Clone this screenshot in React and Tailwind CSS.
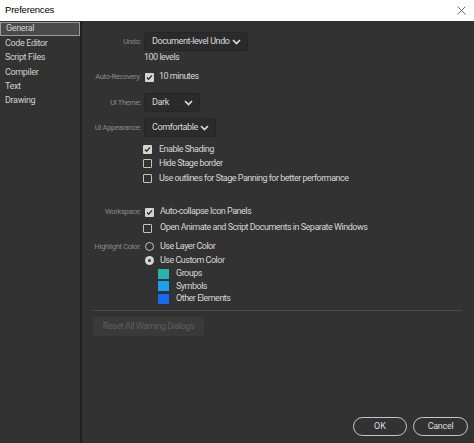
import React from "react";

const FONT = { fontFamily: '"Roboto", "Liberation Sans", sans-serif' };

const Chevron = () => (
  <svg width="9" height="6" viewBox="0 0 9 6" className="shrink-0">
    <path d="M1 1l3.5 3.5L8 1" fill="none" stroke="#e0e0e0" strokeWidth="1.6" />
  </svg>
);

const Dropdown = ({ value, width }) => (
  <div
    className={`flex h-[19px] items-center justify-between rounded-[2px] border border-[#262626] bg-[#2b2b2b] pl-[7px] pr-[6px] text-[9px] tracking-[-0.4px] whitespace-nowrap text-[#dadada] ${width}`}
  >
    <span>{value}</span>
    <Chevron />
  </div>
);

const Checkbox = ({ checked }) =>
  checked ? (
    <div className="flex h-[9px] w-[9px] shrink-0 items-center justify-center rounded-[1px] bg-[#d4d4d4]">
      <svg width="7" height="7" viewBox="0 0 7 7">
        <path d="M1 3.6l1.6 1.6L6 1.4" fill="none" stroke="#2b2b2b" strokeWidth="1.4" />
      </svg>
    </div>
  ) : (
    <div className="h-[9px] w-[9px] shrink-0 rounded-[1px] border border-[#c4c4c4]" />
  );

const Radio = ({ checked }) =>
  checked ? (
    <div className="flex h-[9px] w-[9px] shrink-0 items-center justify-center rounded-full bg-[#d4d4d4]">
      <div className="h-[3px] w-[3px] rounded-full bg-[#3a3a3a]" />
    </div>
  ) : (
    <div className="h-[9px] w-[9px] shrink-0 rounded-full border border-[#c4c4c4]" />
  );

// one line of the form: grey label on the left, control on the right
const Row = ({ label, className = "", children }) => (
  <div className={`flex items-center ${className}`}>
    <div className="w-[62px] shrink-0 pr-[3px] text-right text-[7.5px] tracking-[-0.3px] whitespace-nowrap text-[#8a8a8a]">
      {label}
    </div>
    <div className="flex items-center">{children}</div>
  </div>
);

const Text = ({ className = "", children }) => (
  <span className={`text-[9px] tracking-[-0.5px] whitespace-nowrap text-[#d6d6d6] ${className}`}>{children}</span>
);

const Swatch = ({ color, label }) => (
  <div className="flex h-[12.5px] items-center pl-[76px]">
    <div className={`h-[10px] w-[11px] ${color}`} />
    <Text className="ml-[7px]">{label}</Text>
  </div>
);

const sections = ["General", "Code Editor", "Script Files", "Compiler", "Text", "Drawing"];

export default function App() {
  return (
    <div className="flex h-[443px] w-[474px] flex-col bg-[#323232]" style={FONT}>
      {/* title bar */}
      <div className="flex h-[21px] shrink-0 items-center justify-between bg-white pl-[5px] pr-[8px]">
        <span
          className="text-[9.5px] tracking-[-0.2px] text-black"
          style={{ fontFamily: '"Liberation Sans", sans-serif' }}
        >
          Preferences
        </span>
        <svg width="9" height="9" viewBox="0 0 9 9">
          <path d="M0.5 0.5l8 8M8.5 0.5l-8 8" stroke="#6a6a6a" strokeWidth="1" />
        </svg>
      </div>

      <div className="flex flex-1">
        {/* sidebar */}
        <div className="w-[82px] shrink-0 border-r-2 border-[#1f1f1f] pt-[1px]">
          {sections.map((s, i) => (
            <div
              key={s}
              className={`flex h-[14.4px] items-center pl-[5px] text-[9px] tracking-[-0.35px] text-[#d0d0d0] ${
                i === 0 ? "border border-[#9a9a9a] bg-[#4a4a4a] pl-[4px]" : ""
              }`}
            >
              {s}
            </div>
          ))}
        </div>

        {/* settings */}
        <div className="flex flex-1 flex-col pr-[12px]">
          <Row label="Undo:" className="mt-[11px]">
            <Dropdown value="Document-level Undo" width="w-[104px]" />
          </Row>
          <Row label="" className="h-[14px]">
            <Text>100 levels</Text>
          </Row>
          <Row label="Auto-Recovery:" className="mt-[5px] h-[14px]">
            <div className="ml-[1px]">
              <Checkbox checked />
            </div>
            <Text className="ml-[5px]">10 minutes</Text>
          </Row>
          <Row label="UI Theme:" className="mt-[9px]">
            <Dropdown value="Dark" width="w-[56px]" />
          </Row>
          <Row label="UI Appearance:" className="mt-[6px]">
            <Dropdown value="Comfortable" width="w-[72px]" />
          </Row>

          <div className="mt-[5px]">
            {[
              ["Enable Shading", true],
              ["Hide Stage border", false],
              ["Use outlines for Stage Panning for better performance", false],
            ].map(([text, on]) => (
              <Row key={text} label="" className="h-[14.5px]">
                <div className="-ml-[1px]">
                  <Checkbox checked={on} />
                </div>
                <Text className="ml-[7px]">{text}</Text>
              </Row>
            ))}
          </div>

          <Row label="Workspace:" className="mt-[19px] h-[15px]">
            <div className="ml-[1px]">
              <Checkbox checked />
            </div>
            <Text className="ml-[6px]">Auto-collapse Icon Panels</Text>
          </Row>
          <Row label="" className="mt-[1px] h-[15px]">
            <div className="-ml-[1px]">
              <Checkbox />
            </div>
            <Text className="ml-[8px]">Open Animate and Script Documents in Separate Windows</Text>
          </Row>

          <Row label="Highlight Color:" className="mt-[4px] h-[14px]">
            <div className="ml-[1px]">
              <Radio />
            </div>
            <Text className="ml-[6px]">Use Layer Color</Text>
          </Row>
          <Row label="" className="h-[14px]">
            <div className="ml-[1px]">
              <Radio checked />
            </div>
            <Text className="ml-[6px]">Use Custom Color</Text>
          </Row>
          <Swatch color="bg-[#2ab3ad]" label="Groups" />
          <Swatch color="bg-[#1aa2ee]" label="Symbols" />
          <Swatch color="bg-[#1769f0]" label="Other Elements" />

          <div className="ml-[11px] mt-[5px] h-px bg-[#4a4a4a]" />

          <div className="ml-[11px] mt-[6px]">
            <div className="flex h-[19px] w-[111px] items-center justify-center rounded-[2px] bg-[#3a3a3a] text-[9px] tracking-[-0.45px] whitespace-nowrap text-[#5e5e5e]">
              Reset All Warning Dialogs
            </div>
          </div>

          <div className="-mr-[6px] mb-[7px] mt-auto flex justify-end gap-[6px]">
            <button className="h-[19px] w-[54px] rounded-full border-[1.5px] border-[#c6c6c6] text-[9px] text-[#dcdcdc]">
              OK
            </button>
            <button className="h-[19px] w-[55px] rounded-full border-[1.5px] border-[#c6c6c6] text-[9px] tracking-[-0.3px] text-[#dcdcdc]">
              Cancel
            </button>
          </div>
        </div>
      </div>
    </div>
  );
}
